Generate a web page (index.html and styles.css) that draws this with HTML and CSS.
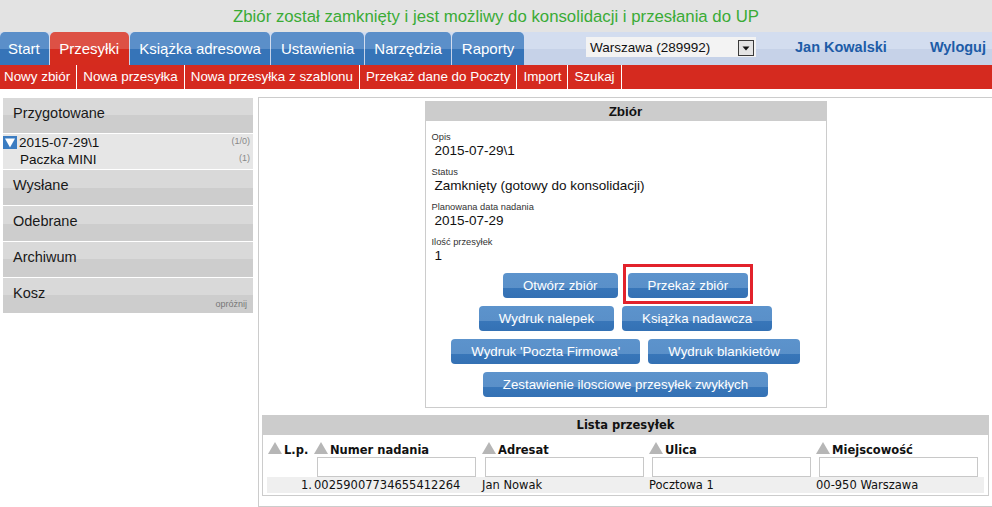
FILE: index.html
```html
<!DOCTYPE html>
<html lang="pl">
<head>
    <meta charset="UTF-8">
    <meta name="viewport" content="width=device-width, initial-scale=1.0">
    <title>Zbiór</title>
    <link rel="stylesheet" href="styles.css">
</head>
<body>

    <div class="message">Zbiór został zamknięty i jest możliwy do konsolidacji i przesłania do UP</div>

    <!-- Zakładki główne -->
    <nav class="topbar">
        <ul class="tabs">
            <li class="tab">Start</li>
            <li class="tab active">Przesyłki</li>
            <li class="tab">Książka adresowa</li>
            <li class="tab">Ustawienia</li>
            <li class="tab">Narzędzia</li>
            <li class="tab">Raporty</li>
        </ul>
        <div class="office-select">
            <span>Warszawa (289992)</span>
            <svg class="select-arrow" width="16" height="16" viewBox="0 0 16 16">
                <rect x="0.5" y="0.5" width="15" height="15" fill="#e4e4e4" stroke="#3a3a3a"/>
                <path d="M4.5 6.5h7l-3.5 4z" fill="#111"/>
            </svg>
        </div>
        <a class="user" href="#">Jan Kowalski</a>
        <a class="logout" href="#">Wyloguj</a>
    </nav>

    <!-- Podmenu -->
    <nav class="submenu">
        <a href="#">Nowy zbiór</a>
        <a href="#">Nowa przesyłka</a>
        <a href="#">Nowa przesyłka z szablonu</a>
        <a href="#">Przekaż dane do Poczty</a>
        <a href="#">Import</a>
        <a href="#">Szukaj</a>
    </nav>

    <div class="layout">
        <aside class="sidebar">
            <div class="folder">Przygotowane</div>
            <div class="tree">
                <div class="tree-row">
                    <span class="tree-label">
                        <svg class="tree-icon" width="14" height="13" viewBox="0 0 14 13">
                            <rect width="14" height="13" fill="#3b7cc1"/>
                            <path d="M2 2.5h10l-5 9z" fill="#fff"/>
                        </svg>2015-07-29\1
                    </span>
                    <span class="count">(1/0)</span>
                </div>
                <div class="tree-row sub">
                    <span>Paczka MINI</span>
                    <span class="count">(1)</span>
                </div>
            </div>
            <div class="folder">Wysłane</div>
            <div class="folder">Odebrane</div>
            <div class="folder">Archiwum</div>
            <div class="folder">Kosz<span class="empty-bin">opróżnij</span></div>
        </aside>

        <main class="content">
            <section class="box collection">
                <h2 class="box-title">Zbiór</h2>
                <div class="box-body">
                    <div class="field">
                        <div class="field-label">Opis</div>
                        <div class="field-value">2015-07-29\1</div>
                    </div>
                    <div class="field">
                        <div class="field-label">Status</div>
                        <div class="field-value">Zamknięty (gotowy do konsolidacji)</div>
                    </div>
                    <div class="field">
                        <div class="field-label">Planowana data nadania</div>
                        <div class="field-value">2015-07-29</div>
                    </div>
                    <div class="field">
                        <div class="field-label">Ilość przesyłek</div>
                        <div class="field-value">1</div>
                    </div>

                    <div class="actions">
                        <div class="action-row">
                            <button class="btn">Otwórz zbiór</button>
                            <button class="btn btn-highlight">Przekaż zbiór</button>
                        </div>
                        <div class="action-row">
                            <button class="btn">Wydruk nalepek</button>
                            <button class="btn">Książka nadawcza</button>
                        </div>
                        <div class="action-row">
                            <button class="btn">Wydruk 'Poczta Firmowa'</button>
                            <button class="btn">Wydruk blankietów</button>
                        </div>
                        <div class="action-row">
                            <button class="btn">Zestawienie ilosciowe przesyłek zwykłych</button>
                        </div>
                    </div>
                </div>
            </section>

            <section class="box list">
                <h2 class="box-title">Lista przesyłek</h2>
                <div class="list-body">
                    <table class="shipments">
                        <colgroup>
                            <col style="width: 46px">
                            <col style="width: 168px">
                            <col style="width: 167px">
                            <col style="width: 167px">
                            <col>
                        </colgroup>
                        <thead>
                            <tr class="head-row">
                                <th><span class="sort"></span>L.p.</th>
                                <th><span class="sort"></span>Numer nadania</th>
                                <th><span class="sort"></span>Adresat</th>
                                <th><span class="sort"></span>Ulica</th>
                                <th><span class="sort"></span>Miejscowość</th>
                            </tr>
                            <tr class="filter-row">
                                <td></td>
                                <td><input type="text"></td>
                                <td><input type="text"></td>
                                <td><input type="text"></td>
                                <td><input type="text"></td>
                            </tr>
                        </thead>
                        <tbody>
                            <tr class="data-row">
                                <td class="num">1.</td>
                                <td>00259007734655412264</td>
                                <td>Jan Nowak</td>
                                <td>Pocztowa 1</td>
                                <td>00-950 Warszawa</td>
                            </tr>
                        </tbody>
                    </table>
                </div>
            </section>
        </main>
    </div>

</body>
</html>
```

FILE: styles.css
```css
* {
    box-sizing: border-box;
}

body {
    margin: 0;
    font-family: "Liberation Sans", Arial, sans-serif;
    color: #1a1a1a;
    background-color: #ffffff;
}

/* Komunikat */
.message {
    height: 32px;
    padding-top: 2px;
    line-height: 30px;
    background-color: #e3e3e3;
    color: #3aab36;
    font-size: 16.8px;
    text-align: center;
}

/* Zakładki */
.topbar {
    display: flex;
    height: 33px;
    background: linear-gradient(#d3ddef 0, #d3ddef 52%, #c6d2e8 52%, #c6d2e8 100%);
}

.tabs {
    display: flex;
    list-style: none;
    margin: 0;
    padding: 0;
}

.tab {
    height: 33px;
    line-height: 33px;
    padding: 0 9.5px;
    margin-right: 1px;
    font-size: 15px;
    color: #ffffff;
    border-radius: 5px 5px 0 0;
    background: linear-gradient(#5b8fc9 0, #5b8fc9 52%, #3674b8 52%, #3674b8 100%);
}

.tab:first-child {
    padding: 0 9px 0 8px;
}

.tab.active {
    background: linear-gradient(#dd5145 0, #dd5145 52%, #d52b1e 52%, #d52b1e 100%);
}

.office-select {
    display: flex;
    align-items: center;
    justify-content: space-between;
    width: 170px;
    height: 20px;
    margin: 5px 0 0 auto;
    padding: 1px 2px 0 4px;
    background-color: #f3f3f3;
    font-size: 13.5px;
    color: #111111;
}

.select-arrow {
    display: block;
}

.user,
.logout {
    line-height: 30px;
    font-size: 14.5px;
    font-weight: bold;
    color: #1d5ca7;
    text-decoration: none;
}

.user {
    margin-left: 39px;
}

.logout {
    margin: 0 6px 0 43px;
}

/* Podmenu */
.submenu {
    display: flex;
    height: 24px;
    background-color: #d52a1f;
}

.submenu a {
    padding: 0 6px;
    line-height: 24px;
    font-size: 13.4px;
    color: #ffffff;
    text-decoration: none;
    border-right: 1px solid #ffffff;
}

.submenu a:first-child {
    padding-left: 4px;
}

/* Układ */
.layout {
    display: flex;
    align-items: flex-start;
}

.sidebar {
    width: 250px;
    margin: 9px 0 0 3px;
}

.folder {
    display: flex;
    justify-content: space-between;
    height: 35px;
    margin-bottom: 1px;
    padding: 5px 10px 0;
    line-height: 20px;
    font-size: 14.5px;
    color: #1a1a1a;
    background: linear-gradient(#d9d9d9 0, #d9d9d9 50%, #cdcdcd 50%, #cdcdcd 100%);
}

.empty-bin {
    align-self: flex-end;
    margin: 0 -4px 3px 0;
    line-height: 11px;
    font-size: 9px;
    color: #777777;
}

.tree {
    height: 35px;
    margin-bottom: 1px;
    background-color: #e6e6e6;
    font-size: 13.5px;
    color: #111111;
}

.tree-row {
    display: flex;
    justify-content: space-between;
    padding-right: 3px;
    line-height: 17px;
}

.tree-row.sub {
    padding-left: 17px;
}

.tree-label {
    display: flex;
    align-items: center;
}

.tree-icon {
    margin-right: 2px;
}

.count {
    line-height: 14px;
    font-size: 9px;
    color: #888888;
}

/* Panel główny */
.content {
    flex: 1;
    margin: 8px 0 0 5px;
    padding: 3px 3px 10px;
    border: 1px solid #cccccc;
    border-right: none;
}

.box {
    border: 1px solid #cccccc;
}

.box-title {
    margin: 0;
    height: 19px;
    line-height: 19px;
    background-color: #cccccc;
    text-align: center;
    font-size: 13.5px;
    font-weight: bold;
    color: #111111;
}

.collection {
    width: 402px;
    margin: 0 auto;
}

.box-body {
    padding: 11px 6px 10px;
}

.field {
    margin-bottom: 8px;
}

.field-label {
    line-height: 11px;
    font-size: 9.3px;
    color: #333333;
}

.field-value {
    padding-left: 3px;
    line-height: 16px;
    font-size: 13.5px;
    color: #111111;
}

.actions {
    display: flex;
    flex-direction: column;
    align-items: center;
    gap: 8px;
    padding-top: 1px;
}

.action-row {
    display: flex;
    gap: 8px;
}

.btn {
    height: 25px;
    padding: 0 20px;
    border: none;
    border-radius: 4px;
    font-family: "Liberation Sans", Arial, sans-serif;
    font-size: 13.3px;
    color: #ffffff;
    background: linear-gradient(#5c93cc 0, #5a90c9 58%, #3876b9 60%, #3471b4 100%);
    cursor: pointer;
}

.btn-highlight {
    position: relative;
    margin-left: 2px;
}

.btn-highlight::after {
    content: "";
    position: absolute;
    left: -5px;
    right: -5px;
    top: -9px;
    bottom: -6px;
    border: 3px solid #e2222b;
}

/* Lista przesyłek */
.list {
    margin-top: 7px;
}

.list .box-title {
    font-family: "DejaVu Sans", Verdana, sans-serif;
    font-size: 11.5px;
}

.list-body {
    padding: 4px 4px 2px;
}

.shipments {
    width: 100%;
    border-collapse: collapse;
    table-layout: fixed;
    font-family: "DejaVu Sans", Verdana, sans-serif;
    font-size: 11.5px;
    color: #111111;
}

.shipments th,
.shipments td {
    padding: 0 0 0 1px;
    text-align: left;
    white-space: nowrap;
}

.head-row th {
    height: 17px;
    padding-top: 3px;
    line-height: 14px;
    font-weight: bold;
}

.sort {
    display: inline-block;
    width: 0;
    height: 0;
    margin-right: 2px;
    border-left: 7.5px solid transparent;
    border-right: 7.5px solid transparent;
    border-bottom: 12px solid #b6b6b6;
}

.filter-row td {
    height: 20px;
    padding: 0;
}

.filter-row input {
    display: block;
    width: 159px;
    height: 20px;
    margin-left: 4px;
    padding: 0 2px;
    border: 1px solid #c8c8c8;
    background-color: #ffffff;
}

.data-row td {
    height: 16px;
    line-height: 16px;
    background-color: #efefef;
}

.data-row .num {
    padding-right: 1px;
    text-align: right;
}
```
